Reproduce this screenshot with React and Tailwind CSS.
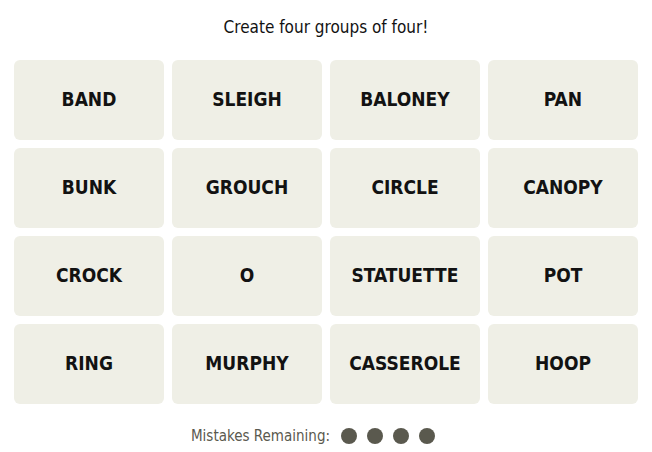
const words = [
  'BAND', 'SLEIGH', 'BALONEY', 'PAN',
  'BUNK', 'GROUCH', 'CIRCLE', 'CANOPY',
  'CROCK', 'O', 'STATUETTE', 'POT',
  'RING', 'MURPHY', 'CASSEROLE', 'HOOP',
];

export default function App() {
  return (
    <div className="w-[652px] h-[452px] bg-white flex flex-col items-center font-['Liberation_Sans_Narrow','DejaVu_Sans_Condensed','Liberation_Sans',sans-serif]">
      <p className="mt-[16px] h-[22px] text-[17px] leading-[22px] text-[#121212]">Create four groups of four!</p>

      <div className="mt-[22px] grid grid-cols-4 gap-2 w-[624px]">
        {words.map((w) => (
          <button
            key={w}
            className="h-[80px] pb-[2px] rounded-md bg-[#efefe6] text-[19px] font-bold text-[#121212] flex items-center justify-center"
          >
            {w}
          </button>
        ))}
      </div>

      {/* mistakes row sits a bit left of centre */}
      <div className="mt-[21px] pr-[26px] flex items-center gap-[11px]">
        <span className="text-[15px] text-[#5a594e]">Mistakes Remaining:</span>
        <div className="flex gap-[10px]">
          <span className="w-4 h-4 rounded-full bg-[#5a594e]" />
          <span className="w-4 h-4 rounded-full bg-[#5a594e]" />
          <span className="w-4 h-4 rounded-full bg-[#5a594e]" />
          <span className="w-4 h-4 rounded-full bg-[#5a594e]" />
        </div>
      </div>
    </div>
  );
}
